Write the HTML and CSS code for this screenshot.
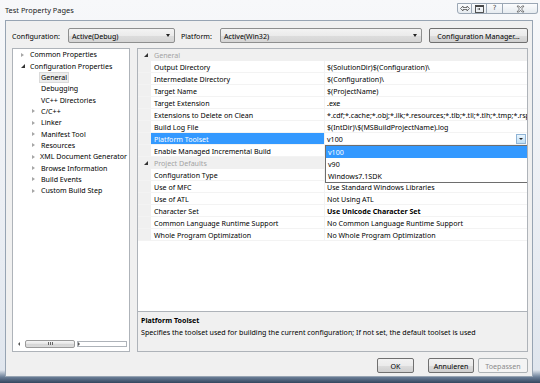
FILE: index.html
```html
<!DOCTYPE html>
<html>
<head>
<meta charset="utf-8">
<link rel="stylesheet" href="styles.css">
</head>
<body>
<div class="window">
  <div class="titlebar">
    <span class="title">Test Property Pages</span>
    <div class="caption-btns">
      <div class="cap-btn"><svg width="10" height="7" viewBox="0 0 10 7"><path d="M0.5 3.5 L3 1 L3 2.5 L7 2.5 L7 1 L9.5 3.5 L7 6 L7 4.5 L3 4.5 L3 6 Z" fill="none" stroke="#555" stroke-width="0.8"/></svg></div>
      <div class="cap-btn"><svg width="9" height="8" viewBox="0 0 9 8"><rect x="0.5" y="0.5" width="8" height="7" fill="none" stroke="#444" stroke-width="0.9"/><rect x="0.5" y="0.5" width="8" height="1.5" fill="#444"/><path d="M2.5 4 L4.5 4 M4 3 L5 4 L4 5" stroke="#444" stroke-width="0.8" fill="none"/></svg></div>
      <div class="cap-btn help">?</div>
      <div class="cap-btn close"><svg width="9" height="8" viewBox="0 0 9 8"><path d="M1 1 L3 1 L4.5 2.8 L6 1 L8 1 L5.6 4 L8 7 L6 7 L4.5 5.2 L3 7 L1 7 L3.4 4 Z" fill="none" stroke="#555" stroke-width="0.7"/></svg></div>
    </div>
  </div>
  <div class="client">
    <div class="config-row">
      <span class="lbl lbl-config">Configuration:</span>
      <div class="combo combo-config"><span>Active(Debug)</span><span class="caret"></span></div>
      <span class="lbl lbl-platform">Platform:</span>
      <div class="combo combo-platform"><span>Active(Win32)</span><span class="caret"></span></div>
      <div class="btn btn-manager">Configuration Manager...</div>
    </div>
    <div class="main">
      <div class="tree">
        <div class="tree-items">
          <div class="titem l0"><span class="arr"><span class="tri-closed"></span></span><span class="tt">Common Properties</span></div>
          <div class="titem l0"><span class="arr"><span class="tri-open"></span></span><span class="tt">Configuration Properties</span></div>
          <div class="titem l1"><span class="arr"></span><span class="tt sel">General</span></div>
          <div class="titem l1"><span class="arr"></span><span class="tt">Debugging</span></div>
          <div class="titem l1"><span class="arr"></span><span class="tt">VC++ Directories</span></div>
          <div class="titem l1"><span class="arr"><span class="tri-closed"></span></span><span class="tt">C/C++</span></div>
          <div class="titem l1"><span class="arr"><span class="tri-closed"></span></span><span class="tt">Linker</span></div>
          <div class="titem l1"><span class="arr"><span class="tri-closed"></span></span><span class="tt">Manifest Tool</span></div>
          <div class="titem l1"><span class="arr"><span class="tri-closed"></span></span><span class="tt">Resources</span></div>
          <div class="titem l1"><span class="arr"><span class="tri-closed"></span></span><span class="tt">XML Document Generator</span></div>
          <div class="titem l1"><span class="arr"><span class="tri-closed"></span></span><span class="tt">Browse Information</span></div>
          <div class="titem l1"><span class="arr"><span class="tri-closed"></span></span><span class="tt">Build Events</span></div>
          <div class="titem l1"><span class="arr"><span class="tri-closed"></span></span><span class="tt">Custom Build Step</span></div>
        </div>
        <div class="hscroll">
          <span class="sarrow left"></span>
          <div class="thumb"><span class="grip"></span></div>
          <span class="sarrow right"></span>
        </div>
      </div>
      <div class="right">
        <div class="grid">
          <div class="row group"><span class="mg"><span class="tri-open"></span></span><span class="gname">General</span></div>
          <div class="row"><span class="mg"></span><span class="nm">Output Directory</span><span class="vl">$(SolutionDir)$(Configuration)\</span></div>
          <div class="row"><span class="mg"></span><span class="nm">Intermediate Directory</span><span class="vl">$(Configuration)\</span></div>
          <div class="row"><span class="mg"></span><span class="nm">Target Name</span><span class="vl">$(ProjectName)</span></div>
          <div class="row"><span class="mg"></span><span class="nm">Target Extension</span><span class="vl">.exe</span></div>
          <div class="row"><span class="mg"></span><span class="nm">Extensions to Delete on Clean</span><span class="vl">*.cdf;*.cache;*.obj;*.ilk;*.resources;*.tlb;*.tli;*.tlh;*.tmp;*.rsp;</span></div>
          <div class="row"><span class="mg"></span><span class="nm">Build Log File</span><span class="vl">$(IntDir)\$(MSBuildProjectName).log</span></div>
          <div class="row selected"><span class="mg"></span><span class="nm">Platform Toolset</span><span class="vl vl-edit"><span>v100</span><span class="dd-btn"><span class="caret small"></span></span></span></div>
          <div class="row"><span class="mg"></span><span class="nm">Enable Managed Incremental Build</span><span class="vl"></span></div>
          <div class="row group"><span class="mg"><span class="tri-open"></span></span><span class="gname">Project Defaults</span></div>
          <div class="row"><span class="mg"></span><span class="nm">Configuration Type</span><span class="vl"></span></div>
          <div class="row"><span class="mg"></span><span class="nm">Use of MFC</span><span class="vl">Use Standard Windows Libraries</span></div>
          <div class="row"><span class="mg"></span><span class="nm">Use of ATL</span><span class="vl">Not Using ATL</span></div>
          <div class="row"><span class="mg"></span><span class="nm">Character Set</span><span class="vl bold">Use Unicode Character Set</span></div>
          <div class="row"><span class="mg"></span><span class="nm">Common Language Runtime Support</span><span class="vl">No Common Language Runtime Support</span></div>
          <div class="row"><span class="mg"></span><span class="nm">Whole Program Optimization</span><span class="vl">No Whole Program Optimization</span></div>
          <div class="dropdown">
            <div class="dd-item active">v100</div>
            <div class="dd-item">v90</div>
            <div class="dd-item">Windows7.1SDK</div>
          </div>
        </div>
        <div class="desc">
          <div class="desc-title">Platform Toolset</div>
          <div class="desc-text">Specifies the toolset used for building the current configuration; If not set, the default toolset is used</div>
        </div>
      </div>
    </div>
    <div class="buttons">
      <div class="btn btn-ok">OK</div>
      <div class="btn btn-cancel">Annuleren</div>
      <div class="btn btn-apply disabled">Toepassen</div>
    </div>
  </div>
</div>
</body>
</html>
```

FILE: styles.css
```css
html, body {
  margin: 0;
  padding: 0;
}
body {
  width: 540px;
  height: 383px;
  overflow: hidden;
  font-family: "Noto Sans", "DejaVu Sans", sans-serif;
  font-size: 7.1px;
  color: #000;
}
.window {
  width: 540px;
  height: 383px;
  box-sizing: border-box;
  padding: 0 7px 6px 5px;
  display: flex;
  flex-direction: column;
  background: linear-gradient(to bottom, #f7f8fa 0px, #eceff4 200px, #e0e6ee 370px, #6b7f98 377px, #34465e 383px);
}
.titlebar {
  height: 20px;
  display: flex;
  align-items: center;
  flex-shrink: 0;
}
.title {
  font-size: 7.4px;
  color: #1a1a1a;
}
.caption-btns {
  margin-left: auto;
  margin-right: -5px;
  align-self: flex-start;
  margin-top: 3px;
  display: flex;
}
.cap-btn {
  height: 11px;
  width: 15px;
  box-sizing: border-box;
  border: 1px solid #9ba7b5;
  border-left-width: 0;
  background: linear-gradient(#fbfcfd, #e6ebf0);
  display: flex;
  align-items: center;
  justify-content: center;
  font-size: 8px;
  color: #444;
  line-height: 1;
}
.cap-btn:first-child {
  border-left-width: 1px;
  border-radius: 0 0 0 3px;
}
.cap-btn.help {
  width: 16px;
  font-family: "DejaVu Sans", sans-serif;
  font-size: 7px;
}
.cap-btn.close {
  width: 35px;
  border-radius: 0 0 3px 0;
}
.client {
  flex: 1;
  background: #f0f0f0;
  border: 1px solid #97a4b3;
  padding: 7px 4px 0 6px;
  display: flex;
  flex-direction: column;
}
.config-row {
  height: 15px;
  display: flex;
  align-items: center;
  flex-shrink: 0;
}
.lbl-config { width: 56px; }
.lbl-platform { width: 39px; margin-left: 6px; }
.combo {
  height: 15px;
  box-sizing: border-box;
  border: 1px solid #8e8f8f;
  border-radius: 2px;
  background: linear-gradient(#f3f3f3 0%, #ebebeb 50%, #dddddd 51%, #d5d5d5 100%);
  display: flex;
  align-items: center;
  justify-content: space-between;
  padding: 0 4px 0 3px;
}
.combo-config { width: 107px; }
.combo-platform { width: 202px; }
.caret {
  width: 0;
  height: 0;
  border-left: 2.5px solid transparent;
  border-right: 2.5px solid transparent;
  border-top: 3px solid #222;
}
.caret.small {
  border-left-width: 2px;
  border-right-width: 2px;
  border-top-width: 2.5px;
}
.btn {
  height: 15px;
  box-sizing: border-box;
  border: 1px solid #707070;
  border-radius: 2px;
  background: linear-gradient(#f2f2f2 0%, #ebebeb 50%, #dddddd 51%, #cfcfcf 100%);
  display: flex;
  align-items: center;
  justify-content: center;
}
.btn-manager { width: 99px; margin-left: 7px; }
.main {
  margin-top: 5px;
  height: 304px;
  display: flex;
  gap: 7px;
  flex-shrink: 0;
}
.tree {
  width: 118px;
  box-sizing: border-box;
  border: 1px solid #aeb3b9;
  background: #fff;
  display: flex;
  flex-direction: column;
}
.tree-items {
  flex: 1;
}
.titem {
  height: 11.35px;
  display: flex;
  align-items: center;
  white-space: nowrap;
}
.titem.l0 { padding-left: 8px; }
.titem.l1 { padding-left: 19px; }
.arr {
  width: 8px;
  display: flex;
  align-items: center;
  justify-content: flex-start;
}
.tri-closed {
  width: 0;
  height: 0;
  border-top: 2.5px solid transparent;
  border-bottom: 2.5px solid transparent;
  border-left: 3px solid #a6a6a6;
}
.tri-open {
  width: 0;
  height: 0;
  border-left: 4px solid transparent;
  border-bottom: 4px solid #333;
}
.tt {
  padding: 0 1px;
  margin-left: -1px;
  border: 1px solid transparent;
  line-height: 9px;
}
.tt.sel {
  background: #ededed;
  border-color: #dadada;
}
.hscroll {
  height: 9px;
  margin: 0 2px 3px 2px;
  display: flex;
  align-items: center;
  gap: 2px;
}
.sarrow {
  width: 8px;
  display: flex;
  justify-content: center;
}
.sarrow.left::before {
  content: "";
  border-top: 2px solid transparent;
  border-bottom: 2px solid transparent;
  border-right: 2px solid #555;
}
.sarrow.right::before {
  content: "";
  border-top: 2px solid transparent;
  border-bottom: 2px solid transparent;
  border-left: 2px solid #555;
}
.thumb {
  flex: 1;
  height: 8px;
  box-sizing: border-box;
  border: 1px solid #9a9a9a;
  border-radius: 2px;
  background: linear-gradient(#f6f6f6, #e4e4e4 50%, #d4d4d4 51%, #dcdcdc);
  display: flex;
  align-items: center;
  justify-content: center;
}
.grip {
  width: 5px;
  height: 3px;
  background: repeating-linear-gradient(to right, #666 0, #666 1px, transparent 1px, transparent 2px);
}
.right {
  flex: 1;
  box-sizing: border-box;
  border: 1px solid #aeb3b9;
  display: flex;
  flex-direction: column;
}
.grid {
  flex: 1;
  background: #fff;
  border-bottom: 1px solid #aeb3b9;
  position: relative;
  overflow: hidden;
}
.row {
  display: grid;
  grid-template-columns: 13px 174px 1fr;
  height: 12px;
  box-sizing: border-box;
  border-bottom: 1px solid #f3f3f3;
  white-space: nowrap;
}
.row > span {
  display: flex;
  align-items: center;
  overflow: hidden;
}
.mg {
  background: #f0f0f0;
  justify-content: center;
  padding-left: 2px;
}
.nm {
  padding-left: 3px;
  border-right: 1px solid #f3f3f3;
}
.vl { padding-left: 2px; }
.vl.bold { font-weight: bold; }
.row.group {
  background: #f0f0f0;
  border-bottom-color: #f0f0f0;
}
.gname {
  grid-column: 2 / 4;
  padding-left: 3px;
  color: #a3a3a3;
}
.row.selected .nm {
  background: #3399ff;
  color: #fff;
}
.vl-edit {
  justify-content: space-between;
  padding-right: 1px;
}
.dd-btn {
  width: 10px;
  height: 10px;
  box-sizing: border-box;
  border: 1px solid #8fb4d6;
  background: linear-gradient(#eaf5fd, #bfdff6);
  display: flex;
  align-items: center;
  justify-content: center;
}
.dropdown {
  position: absolute;
  left: 187px;
  top: 96px;
  width: 203px;
  box-sizing: border-box;
  border: 1px solid #6e6e6e;
  background: #fff;
}
.dd-item {
  height: 12px;
  line-height: 12px;
  padding-left: 2px;
}
.dd-item.active {
  background: #3399ff;
  color: #fff;
}
.desc {
  height: 39px;
  box-sizing: border-box;
  background: #f0f0f0;
  padding: 2px 3px 0 3px;
}
.desc-title {
  font-weight: bold;
  line-height: 12px;
}
.desc-text {
  line-height: 12px;
}
.buttons {
  margin-top: 6px;
  display: flex;
  justify-content: flex-end;
}
.btn-ok { width: 37px; }
.btn-cancel { width: 46px; margin-left: 14px; }
.btn-apply { width: 50px; margin-left: 4px; }
.btn.disabled {
  border-color: #adb2b5;
  background: #f4f4f4;
  color: #8b8b8b;
}
```
